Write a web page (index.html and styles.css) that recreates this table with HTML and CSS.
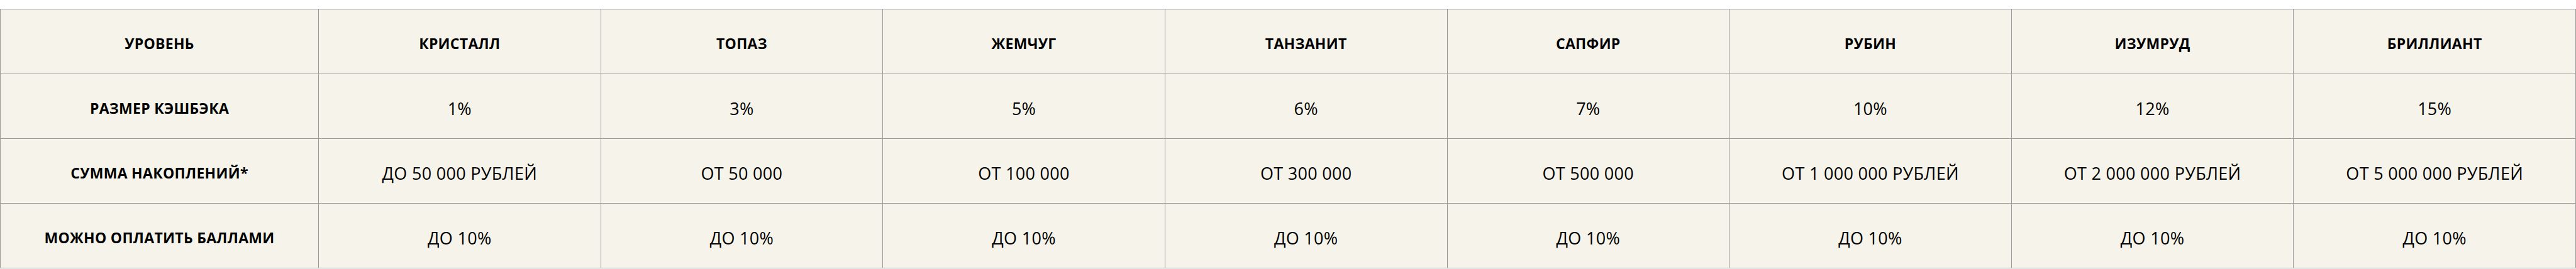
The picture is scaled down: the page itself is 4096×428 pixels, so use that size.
FILE: index.html
```html
<!DOCTYPE html>
<html lang="ru">
<head>
<meta charset="utf-8">
<title>Уровни</title>
<link rel="stylesheet" href="styles.css">
</head>
<body>
<div class="levels" role="table">
  <div class="cell label" role="columnheader">УРОВЕНЬ</div>
  <div class="cell label" role="columnheader">КРИСТАЛЛ</div>
  <div class="cell label" role="columnheader">ТОПАЗ</div>
  <div class="cell label" role="columnheader">ЖЕМЧУГ</div>
  <div class="cell label" role="columnheader">ТАНЗАНИТ</div>
  <div class="cell label" role="columnheader">САПФИР</div>
  <div class="cell label" role="columnheader">РУБИН</div>
  <div class="cell label" role="columnheader">ИЗУМРУД</div>
  <div class="cell label" role="columnheader">БРИЛЛИАНТ</div>

  <div class="cell label" role="rowheader">РАЗМЕР КЭШБЭКА</div>
  <div class="cell value">1%</div>
  <div class="cell value">3%</div>
  <div class="cell value">5%</div>
  <div class="cell value">6%</div>
  <div class="cell value">7%</div>
  <div class="cell value">10%</div>
  <div class="cell value">12%</div>
  <div class="cell value">15%</div>

  <div class="cell label" role="rowheader">СУММА НАКОПЛЕНИЙ*</div>
  <div class="cell value">ДО 50 000 РУБЛЕЙ</div>
  <div class="cell value">ОТ 50 000</div>
  <div class="cell value">ОТ 100 000</div>
  <div class="cell value">ОТ 300 000</div>
  <div class="cell value">ОТ 500 000</div>
  <div class="cell value">ОТ 1 000 000 РУБЛЕЙ</div>
  <div class="cell value">ОТ 2 000 000 РУБЛЕЙ</div>
  <div class="cell value">ОТ 5 000 000 РУБЛЕЙ</div>

  <div class="cell label" role="rowheader">МОЖНО ОПЛАТИТЬ БАЛЛАМИ</div>
  <div class="cell value">ДО 10%</div>
  <div class="cell value">ДО 10%</div>
  <div class="cell value">ДО 10%</div>
  <div class="cell value">ДО 10%</div>
  <div class="cell value">ДО 10%</div>
  <div class="cell value">ДО 10%</div>
  <div class="cell value">ДО 10%</div>
  <div class="cell value">ДО 10%</div>
</div>
</body>
</html>
```
FILE: styles.css
```css
html, body {
  margin: 0;
  padding: 0;
  background: #ffffff;
}
body {
  padding-top: 14px;
  font-family: "Open Sans", "Noto Sans", sans-serif;
  color: #000;
}
.levels {
  display: grid;
  grid-template-columns: 506px repeat(8, 1fr);
  grid-auto-rows: 103px;
  width: 4096px;
  box-sizing: border-box;
  border-top: 1px solid #999;
  border-left: 1px solid #999;
  background: #f6f4ea;
}
.cell {
  display: flex;
  align-items: center;
  justify-content: center;
  text-align: center;
  border-right: 1px solid #999;
  border-bottom: 1px solid #999;
  padding-top: 6px;
  box-sizing: border-box;
}
.label {
  font-size: 23px;
  font-weight: 700;
  letter-spacing: 0.3px;
}
.value {
  font-size: 27px;
  font-weight: 400;
  letter-spacing: 0.3px;
}
```
